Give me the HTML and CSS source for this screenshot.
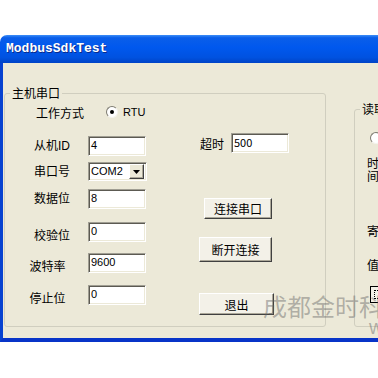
FILE: index.html
```html
<!DOCTYPE html>
<html lang="zh-CN">
<head>
    <meta charset="UTF-8">
    <meta name="viewport" content="width=device-width, initial-scale=1.0">
    <title>ModbusSdkTest</title>
    <link rel="stylesheet" href="styles.css">
</head>
<body>
    <div class="window">
        <div class="titlebar">ModbusSdkTest</div>
        <div class="frame">
            <fieldset class="group host">
                <legend>主机串口</legend>
                <div class="host-body">
                    <div class="fields">
                        <span class="lbl lbl-right">工作方式</span>
                        <div class="radio-row"><span class="radio checked"></span>RTU</div>

                        <span class="lbl">从机ID</span>
                        <div class="edit">4</div>

                        <span class="lbl">串口号</span>
                        <div class="combo">
                            <span>COM2</span>
                            <span class="drop">
                                <svg width="7" height="4" viewBox="0 0 7 4"><polygon points="0,0 7,0 3.5,4" fill="#000"/></svg>
                            </span>
                        </div>

                        <span class="lbl">数据位</span>
                        <div class="edit">8</div>

                        <span class="lbl low">校验位</span>
                        <div class="edit">0</div>

                        <span class="lbl low lbl-left">波特率</span>
                        <div class="edit">9600</div>

                        <span class="lbl low lbl-left">停止位</span>
                        <div class="edit">0</div>
                    </div>

                    <div class="actions">
                        <div class="timeout">
                            <span>超时</span>
                            <div class="edit">500</div>
                        </div>
                        <button class="btn btn-connect">连接串口</button>
                        <button class="btn btn-close">断开连接</button>
                        <button class="btn btn-exit">退出</button>
                    </div>
                </div>
            </fieldset>

            <fieldset class="group read">
                <legend>读取</legend>
                <div class="read-body">
                    <span class="radio read-radio"></span>
                    <div class="read-time">时<br>间</div>
                    <div class="read-reg">寄存器地址</div>
                    <div class="read-val">值</div>
                    <div class="read-btn"><span></span></div>
                </div>
            </fieldset>

            <div class="watermark">成都金时科技<span>www</span></div>
        </div>
    </div>
</body>
</html>
```

FILE: styles.css
```css
body {
    margin: 0;
    width: 378px;
    height: 378px;
    overflow: hidden;
    background-color: #fff;
    font-family: "Liberation Sans", "Noto Sans CJK SC", sans-serif;
    font-size: 12px;
    color: #000;
}
.window {
    margin-top: 35px;
    width: 600px;
}
.titlebar {
    height: 28px;
    padding-left: 6px;
    border-radius: 7px 7px 0 0;
    background: linear-gradient(to bottom, #3d8ef8 0, #0a5ee9 10%, #0058ee 45%, #0052e0 80%, #0043c6 100%);
    color: #fff;
    font: bold 13px/28px "Liberation Mono", monospace;
    text-shadow: 1px 1px 0 #0b2a8a;
}
.frame {
    position: relative;
    display: flex;
    align-items: flex-start;
    height: 275px;
    background-color: #ece9d8;
    border-left: 3px solid #0742d0;
    border-bottom: 4px solid #0834c8;
}
.group {
    box-sizing: border-box;
    margin: 0;
    padding: 3px 0 0;
    border: 1px solid #d0cebf;
    border-radius: 3px;
}
.group legend {
    margin-left: 5px;
    padding: 0 2px;
    line-height: 16px;
    font-family: "Noto Sans CJK SC", sans-serif;
}
.host {
    margin: 22px 0 0 1px;
    width: 322px;
    height: 242px;
}
.host-body {
    display: flex;
    align-items: flex-start;
}
.fields {
    display: grid;
    grid-template-columns: 50px 58px;
    grid-template-rows: 32px 26px 27px 33px 31px 32px 20px;
    column-gap: 11px;
    align-items: start;
    margin-left: 22px;
}
.lbl {
    box-sizing: border-box;
    height: 20px;
    line-height: 20px;
    text-align: center;
}
.lbl.low {
    margin-top: 4px;
}
.lbl-right {
    padding-left: 9px;
    white-space: nowrap;
}
.lbl-left {
    padding-right: 9px;
}
.radio-row {
    display: flex;
    align-items: center;
    gap: 5px;
    height: 16px;
    margin-left: 18px;
    font-size: 11px;
}
.radio {
    box-sizing: border-box;
    display: flex;
    align-items: center;
    justify-content: center;
    width: 12px;
    height: 12px;
    border-radius: 50%;
    border: 1px solid;
    border-color: #7d7b70 #f4f3ee #f4f3ee #7d7b70;
    background-color: #fff;
}
.radio.checked::after {
    content: "";
    width: 4px;
    height: 4px;
    border-radius: 50%;
    background-color: #000;
}
.edit, .combo {
    box-sizing: border-box;
    width: 58px;
    height: 20px;
    padding: 1px 0 0 2px;
    background-color: #fff;
    border: 1px solid;
    border-color: #a09e93 #fff #fff #a09e93;
    box-shadow: inset 1px 1px #5c5a52, inset -1px -1px #ece9d8;
    font-size: 11px;
    line-height: 14px;
}
.combo {
    display: flex;
    justify-content: space-between;
    width: 59px;
    height: 19px;
    padding: 1px 2px 0 2px;
}
.drop {
    box-sizing: border-box;
    display: flex;
    align-items: center;
    justify-content: center;
    width: 15px;
    height: 15px;
    background-color: #ece9d8;
    border: 1px solid;
    border-color: #fff #404040 #404040 #fff;
    box-shadow: inset -1px -1px #aca899;
}
.actions {
    display: flex;
    flex-direction: column;
    align-items: flex-start;
    margin: 29px 0 0 53px;
}
.timeout {
    display: flex;
    align-items: center;
    gap: 7px;
    margin-left: 1px;
    font-family: "Noto Sans CJK SC", sans-serif;
}
.btn {
    box-sizing: border-box;
    padding: 0;
    background-color: #f3f1e8;
    border: 1px solid;
    border-color: #fff #404040 #404040 #fff;
    box-shadow: inset -1px -1px #aca899;
    font: 12px "Noto Sans CJK SC", sans-serif;
    color: #000;
}
.btn-connect {
    width: 68px;
    height: 21px;
    margin: 45px 0 0 5px;
}
.btn-close {
    width: 73px;
    height: 25px;
    margin-top: 18px;
}
.btn-exit {
    width: 75px;
    height: 22px;
    margin-top: 31px;
}
.read {
    margin: 38px 0 0 28px;
    width: 200px;
    height: 226px;
    white-space: nowrap;
    font-family: "Noto Sans CJK SC", sans-serif;
}
.read-body {
    padding-left: 12px;
}
.read-radio {
    margin: 12px 0 0 3px;
}
.read-time {
    margin-top: 12px;
    line-height: 13px;
}
.read-reg {
    margin-top: 42px;
    line-height: 14px;
}
.read-val {
    margin-top: 20px;
    line-height: 14px;
}
.read-btn {
    box-sizing: border-box;
    width: 30px;
    height: 17px;
    margin: 14px 0 0 3px;
    padding: 3px;
    background-color: #f3f1e8;
    border: 1px solid #000;
}
.read-btn span {
    display: block;
    height: 100%;
    border: 1px dotted #000;
    box-sizing: border-box;
}
.watermark {
    position: absolute;
    left: 260px;
    top: 230px;
    font: 24px/26px "Noto Sans CJK SC", sans-serif;
    color: rgba(100, 100, 100, 0.45);
    white-space: nowrap;
}
.watermark span {
    position: absolute;
    left: 106px;
    top: 24px;
    font: 20px/20px "Liberation Sans", sans-serif;
}
```
